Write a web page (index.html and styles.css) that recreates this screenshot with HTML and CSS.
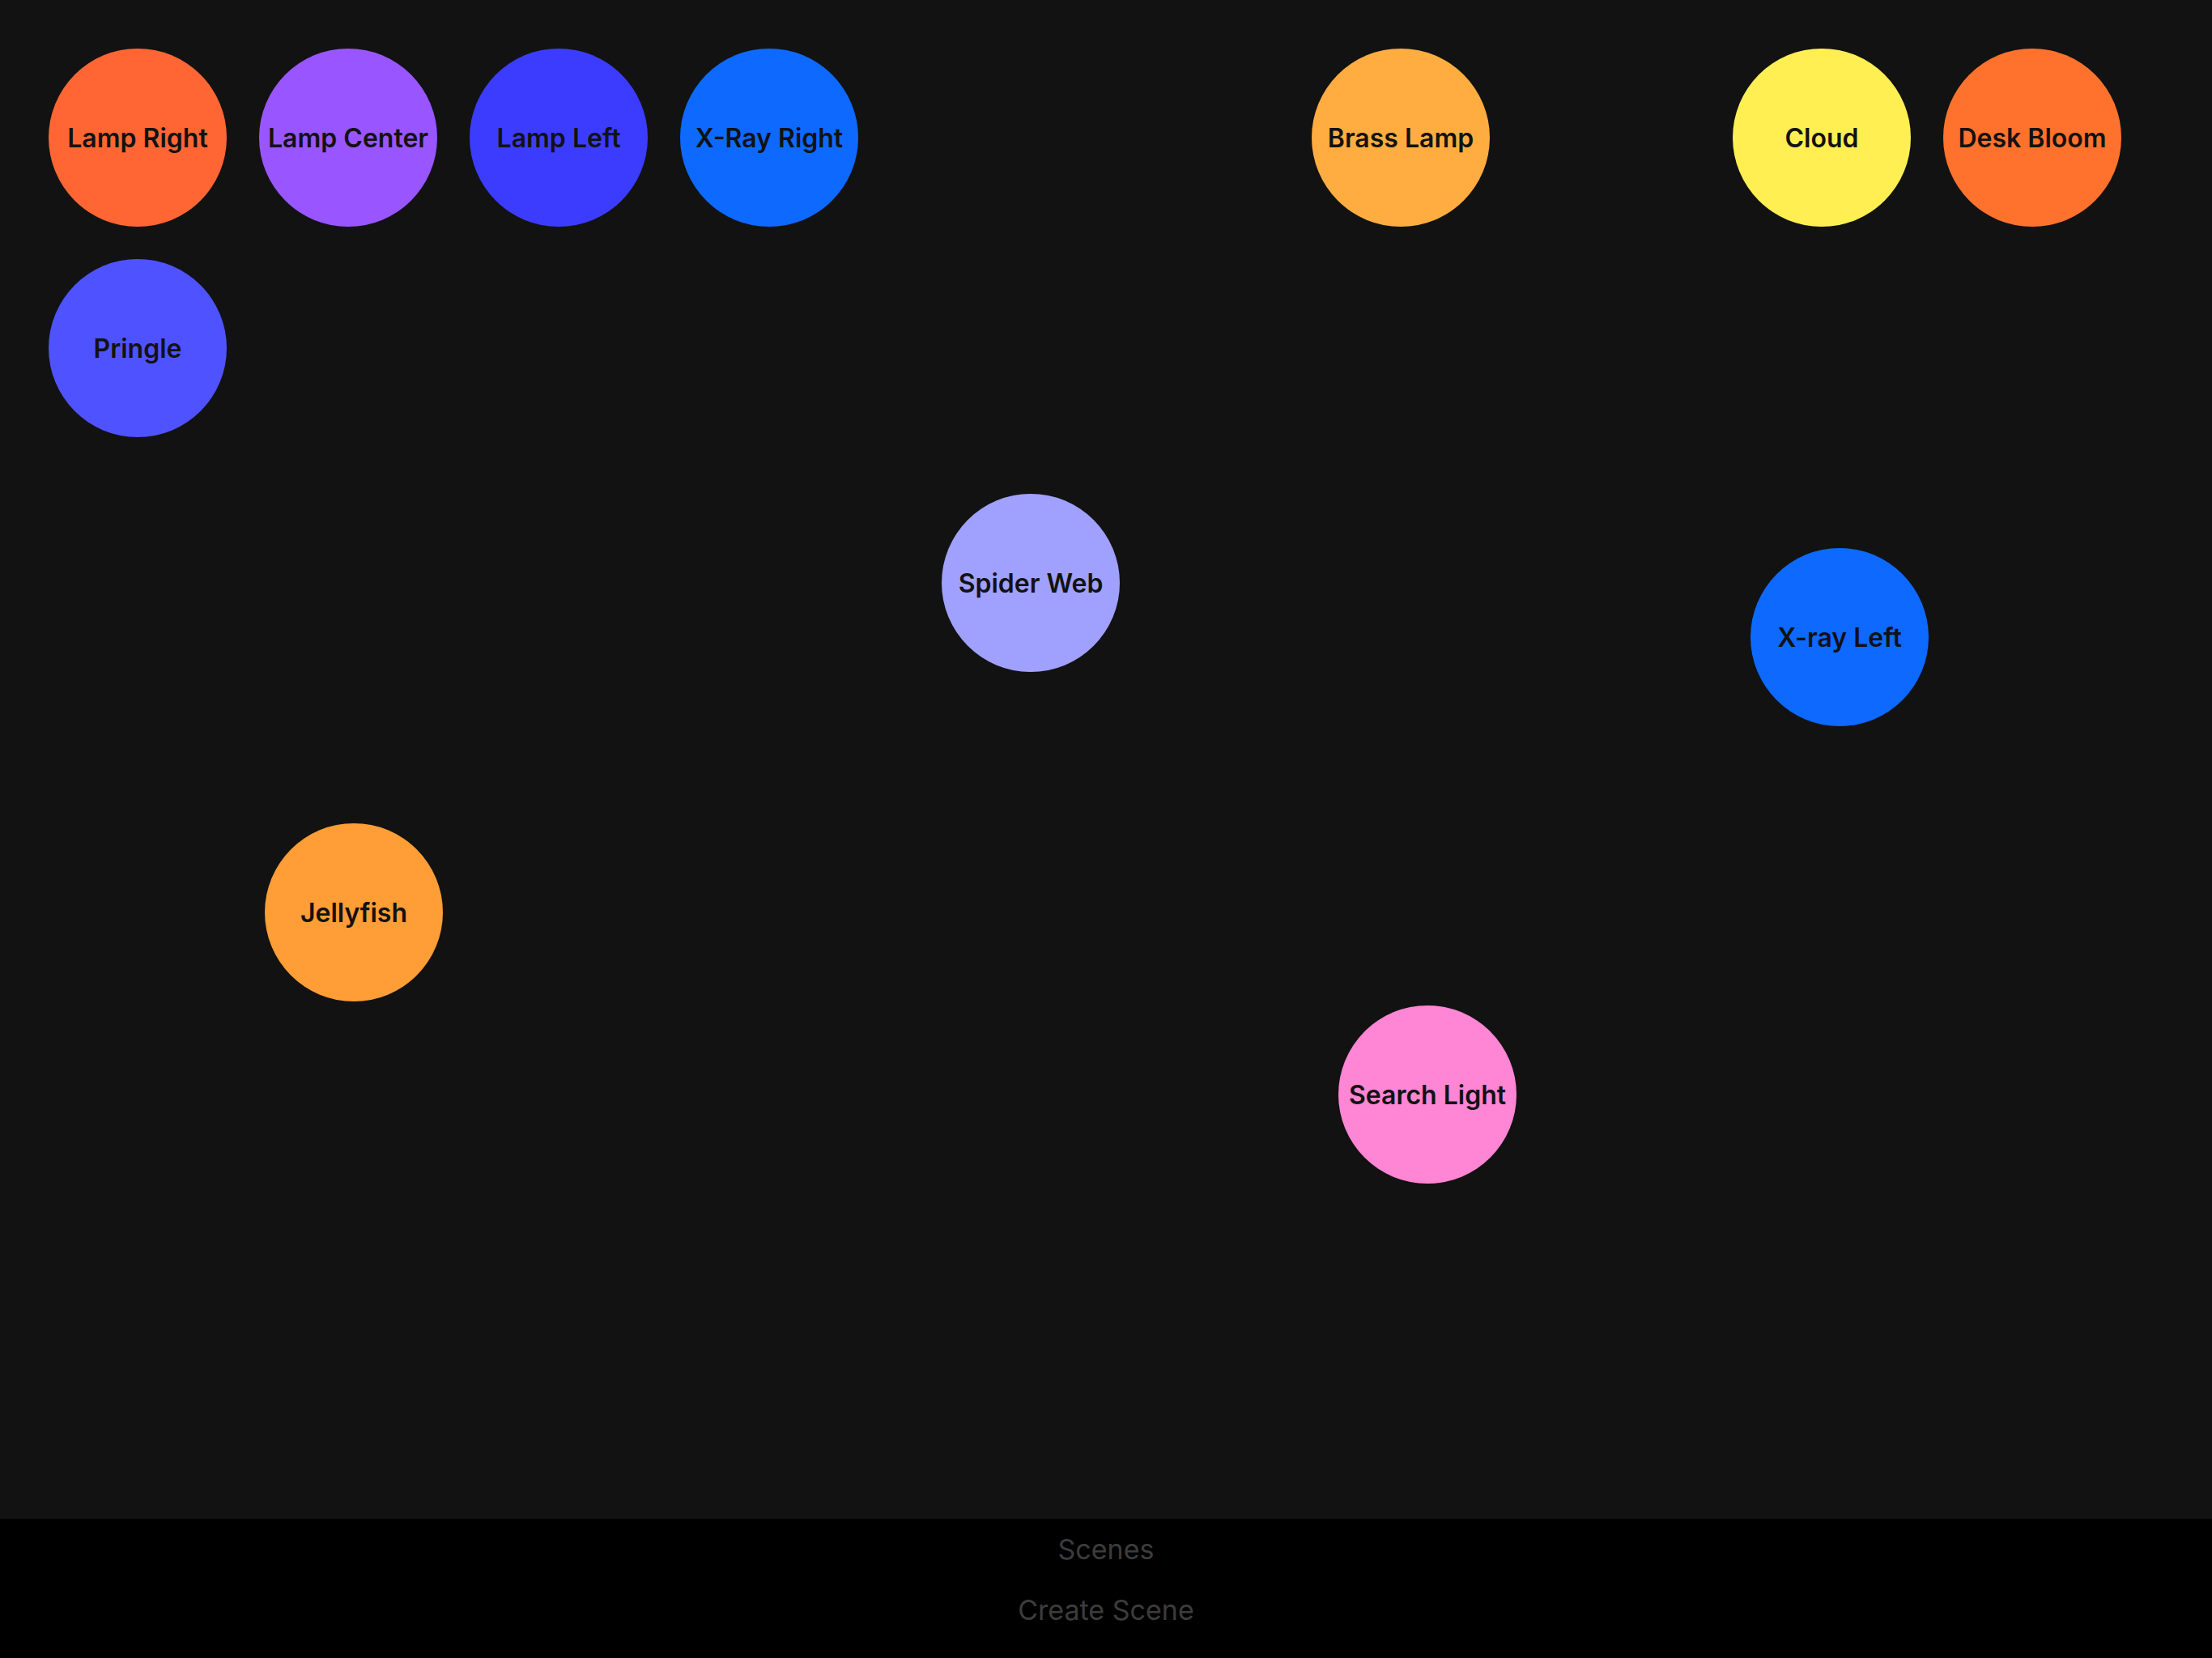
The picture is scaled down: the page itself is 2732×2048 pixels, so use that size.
FILE: index.html
```html
<!DOCTYPE html>
<html lang="en">
<head>
<meta charset="utf-8">
<title>Scenes</title>
<link rel="stylesheet" href="styles.css">
</head>
<body>
<main class="app">
  <section class="canvas">
    <div class="node" style="left:60px;top:60px;background:#ff6633">Lamp Right</div>
    <div class="node" style="left:320px;top:60px;background:#9955ff">Lamp Center</div>
    <div class="node" style="left:580px;top:60px;background:#3c3cff">Lamp Left</div>
    <div class="node" style="left:840px;top:60px;background:#0d69ff">X-Ray Right</div>
    <div class="node" style="left:1620px;top:60px;background:#ffad40">Brass Lamp</div>
    <div class="node" style="left:2140px;top:60px;background:#ffef52">Cloud</div>
    <div class="node" style="left:2400px;top:60px;background:#ff722d">Desk Bloom</div>
    <div class="node" style="left:60px;top:320px;background:#4f52ff">Pringle</div>
    <div class="node" style="left:1163px;top:610px;background:#a0a0ff">Spider Web</div>
    <div class="node" style="left:2162px;top:677px;background:#0d69ff">X-ray Left</div>
    <div class="node" style="left:327px;top:1017px;background:#ff9d36">Jellyfish</div>
    <div class="node" style="left:1653px;top:1242px;background:#ff85d5">Search Light</div>
  </section>
  <footer class="bar">
    <div class="bar-item">Scenes</div>
    <div class="bar-item">Create Scene</div>
  </footer>
</main>
</body>
</html>
```
FILE: styles.css
```css
html, body {
  margin: 0;
  padding: 0;
  background: #121212;
}
.app {
  width: 2732px;
  height: 2048px;
  display: flex;
  flex-direction: column;
  font-family: Inter, "Noto Sans", sans-serif;
}
.canvas {
  position: relative;
  height: 1876px;
  flex: none;
  background: #121212;
  overflow: hidden;
}
.node {
  position: absolute;
  width: 220px;
  height: 220px;
  border-radius: 50%;
  display: flex;
  align-items: center;
  justify-content: center;
  font-size: 32px;
  font-weight: 600;
  color: #121212;
  white-space: nowrap;
}
.bar {
  flex: 1;
  background: #000;
  display: flex;
  flex-direction: column;
  align-items: center;
  padding-top: 18px;
  gap: 35px;
}
.bar-item {
  font-size: 34px;
  line-height: 40px;
  color: #3c3c3c;
}
```
